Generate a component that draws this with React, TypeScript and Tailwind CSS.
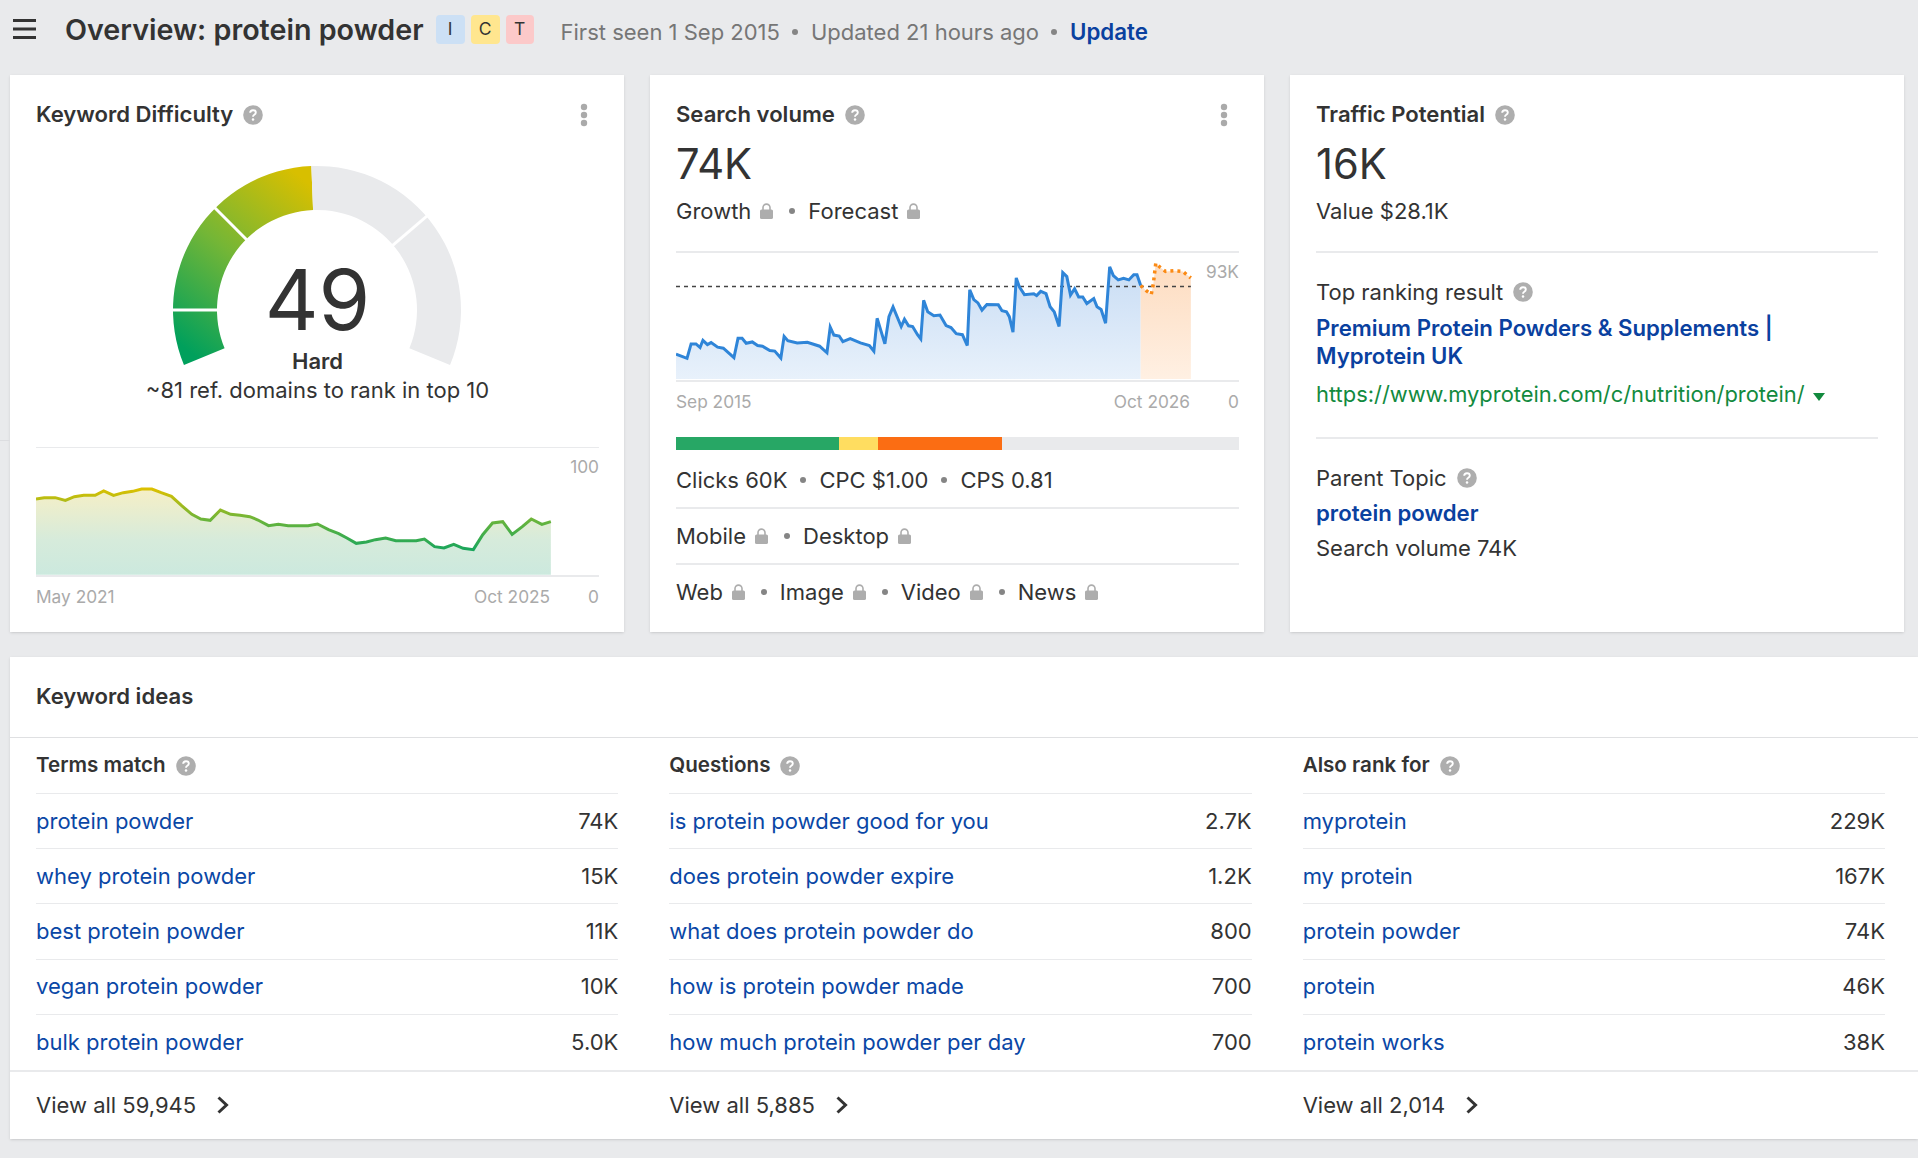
const kdLine =
  "88,238 108,234 135,234 160,242 182,231 205,227 233,227 254,214 278,227 302,219 325,215 347,208 372,208 395,219 420,230 445,258 470,284 492,298 515,302 540,271 565,284 588,287 612,291 632,301 658,318 682,314 706,318 755,318 778,313 805,330 830,342 850,355 873,371 898,367 920,360 945,355 970,363 1020,363 1040,358 1065,381 1088,385 1112,374 1135,386 1160,390 1183,345 1207,310 1232,306 1255,344 1280,321 1302,298 1328,314 1350,306";

const volLine =
  "88,884 115,897 125,853 137,853 147,864 154,842 165,855 174,849 190,863 204,866 230,895 240,836 250,836 260,851 275,847 288,858 300,860 318,873 330,875 345,896 353,830 362,843 385,850 410,848 440,860 458,880 466,802 475,826 488,829 497,846 515,837 540,850 562,858 573,875 581,775 600,853 610,770 620,740 640,800 648,778 658,798 668,800 680,825 688,838 695,720 705,755 720,767 735,765 750,797 762,803 775,822 790,825 802,858 808,688 818,718 828,728 838,750 850,733 878,734 887,752 898,755 905,770 914,817 922,652 930,680 942,703 965,700 972,706 982,693 995,700 1005,740 1015,755 1027,800 1036,636 1046,648 1055,704 1065,685 1075,710 1085,710 1095,730 1112,715 1120,740 1130,748 1141,790 1151,618 1160,645 1172,658 1185,653 1198,658 1210,642 1218,642 1227,675";

const forecastLine =
  "1227,675 1240,690 1253,702 1258,670 1264,607 1275,620 1288,632 1310,630 1330,632 1350,652";

const ideas = [
  {
    title: "Terms match",
    all: "View all 59,945",
    rows: [
      ["protein powder", "74K"],
      ["whey protein powder", "15K"],
      ["best protein powder", "11K"],
      ["vegan protein powder", "10K"],
      ["bulk protein powder", "5.0K"],
    ],
  },
  {
    title: "Questions",
    all: "View all 5,885",
    rows: [
      ["is protein powder good for you", "2.7K"],
      ["does protein powder expire", "1.2K"],
      ["what does protein powder do", "800"],
      ["how is protein powder made", "700"],
      ["how much protein powder per day", "700"],
    ],
  },
  {
    title: "Also rank for",
    all: "View all 2,014",
    rows: [
      ["myprotein", "229K"],
      ["my protein", "167K"],
      ["protein powder", "74K"],
      ["protein", "46K"],
      ["protein works", "38K"],
    ],
  },
];

function HelpIcon({ className = "" }: { className?: string }) {
  return (
    <svg viewBox="0 0 20 20" className={`h-[20px] w-[20px] shrink-0 ${className}`}>
      <circle cx="10" cy="10" r="9.8" fill="#aeaeae" />
      <path
        d="M7.2 7.8c0-1.7 1.2-2.6 2.8-2.6s2.8 1 2.8 2.4c0 1.2-.7 1.7-1.5 2.2-.8.5-1.3.9-1.3 1.9"
        fill="none"
        stroke="#fff"
        strokeWidth="1.9"
      />
      <circle cx="10" cy="14.6" r="1.25" fill="#fff" />
    </svg>
  );
}

function Lock() {
  return (
    <svg viewBox="0 0 13 16" className="ml-[9px] mr-[3px] h-[16px] w-[13px] shrink-0">
      <path d="M3 7V4.6a3.5 3.5 0 0 1 7 0V7" fill="none" stroke="#adadad" strokeWidth="1.6" />
      <rect x="0" y="6.5" width="13" height="9.5" rx="1.6" fill="#adadad" />
    </svg>
  );
}

function Dot() {
  return <span className="mx-[13px] h-[6px] w-[6px] shrink-0 rounded-full bg-[#858585]" />;
}

function Kebab() {
  return (
    <svg viewBox="0 0 8 24" className="h-[24px] w-[8px]">
      <circle cx="4" cy="4" r="3.2" fill="#aaaaaa" />
      <circle cx="4" cy="12" r="3.2" fill="#aaaaaa" />
      <circle cx="4" cy="20" r="3.2" fill="#aaaaaa" />
    </svg>
  );
}

function CardTitle({ title, menu = true }: { title: string; menu?: boolean }) {
  return (
    <div className="flex h-[28px] items-center justify-between">
      <div className="flex items-center gap-[10px]">
        <span className="text-[22.1px] font-semibold">{title}</span>
        <HelpIcon />
      </div>
      {menu && (
        <div className="mr-[11px] flex">
          <Kebab />
        </div>
      )}
    </div>
  );
}

// angle in degrees, 0 = pointing left, going clockwise over the top
function point(r: number, a: number) {
  const rad = (a * Math.PI) / 180;
  return `${(150 - r * Math.cos(rad)).toFixed(2)} ${(150 - r * Math.sin(rad)).toFixed(2)}`;
}

function arc(from: number, to: number) {
  const big = to - from > 180 ? 1 : 0;
  return `M${point(144, from)} A144 144 0 ${big} 1 ${point(144, to)} L${point(100, to)} A100 100 0 ${big} 0 ${point(100, from)} Z`;
}

function Gauge() {
  const seams = [0, 45, 139.5];
  return (
    <svg viewBox="0 0 300 210" className="absolute left-[131px] top-0 h-[210px] w-[300px]">
      <defs>
        <linearGradient id="gauge" gradientUnits="userSpaceOnUse" x1="20" y1="190" x2="150" y2="30">
          <stop offset="0" stopColor="#00a05c" />
          <stop offset="0.5" stopColor="#74b636" />
          <stop offset="1" stopColor="#d8bf00" />
        </linearGradient>
      </defs>
      <path d={arc(-22.5, 87.75)} fill="url(#gauge)" />
      <path d={arc(87.75, 202.5)} fill="#e9eaec" />
      {seams.map((s) => (
        <path key={s} d={`M${point(98, s)} L${point(146, s)}`} stroke="#fff" strokeWidth="3" />
      ))}
    </svg>
  );
}

function KdChart() {
  return (
    <svg
      viewBox="88 85 1380 381"
      preserveAspectRatio="none"
      className="h-[127px] w-full"
    >
      <defs>
        <linearGradient id="kdStroke" gradientUnits="userSpaceOnUse" x1="0" y1="208" x2="0" y2="390">
          <stop offset="0" stopColor="#dcc000" />
          <stop offset="0.5" stopColor="#6cb53a" />
          <stop offset="1" stopColor="#1aa65c" />
        </linearGradient>
        <linearGradient id="kdFill" gradientUnits="userSpaceOnUse" x1="0" y1="208" x2="0" y2="465">
          <stop offset="0" stopColor="#f6efc6" />
          <stop offset="0.6" stopColor="#d6ebdb" />
          <stop offset="1" stopColor="#cce9de" />
        </linearGradient>
      </defs>
      <polygon points={`88,465 ${kdLine} 1350,465`} fill="url(#kdFill)" />
      <polyline
        points={kdLine}
        fill="none"
        stroke="url(#kdStroke)"
        strokeWidth="3"
        vectorEffect="non-scaling-stroke"
      />
    </svg>
  );
}

function VolumeChart() {
  return (
    <svg
      viewBox="88 576 1380 387"
      preserveAspectRatio="none"
      className="h-[127px] w-full"
    >
      <defs>
        <linearGradient id="volFill" x1="0" y1="0" x2="0" y2="1">
          <stop offset="0" stopColor="#c9ddf4" />
          <stop offset="1" stopColor="#e8f1fb" />
        </linearGradient>
        <linearGradient id="fcFill" x1="0" y1="0" x2="0" y2="1">
          <stop offset="0" stopColor="#fddcc0" />
          <stop offset="1" stopColor="#fff0e3" />
        </linearGradient>
      </defs>
      <polygon points={`88,960 ${volLine} 1227,960`} fill="url(#volFill)" />
      <polygon points={`${forecastLine} 1350,960 1227,960`} fill="url(#fcFill)" />
      <line
        x1="88"
        y1="678"
        x2="1350"
        y2="678"
        stroke="#444"
        strokeWidth="1.4"
        strokeDasharray="4 4"
        vectorEffect="non-scaling-stroke"
      />
      <polyline
        points={volLine}
        fill="none"
        stroke="#2f85d8"
        strokeWidth="3"
        vectorEffect="non-scaling-stroke"
      />
      <polyline
        points={forecastLine}
        fill="none"
        stroke="#fb8a14"
        strokeWidth="3.5"
        strokeDasharray="3 4"
        vectorEffect="non-scaling-stroke"
      />
    </svg>
  );
}

function Chevron() {
  return (
    <svg viewBox="0 0 12 18" className="h-[18px] w-[12px]">
      <path d="M1.5 1.5L9.5 9l-8 7.5" fill="none" stroke="#333" strokeWidth="3" />
    </svg>
  );
}

export default function App() {
  return (
    <div
      className="relative min-h-[1158px] overflow-hidden bg-[#e9eaec] text-[22px] text-[#333333]"
      style={{ fontFamily: "Inter, 'Liberation Sans', sans-serif" }}
    >
      <div className="absolute left-0 top-[440px] h-px w-[10px] bg-[#dcdde0]" />

      {/* top bar */}
      <div className="flex h-[75px] items-start pl-[13px] pt-[15px]">
        <svg viewBox="0 0 23 20" className="mt-[4px] h-[20px] w-[23px] shrink-0">
          <rect width="23" height="3" fill="#333" />
          <rect y="8.5" width="23" height="3" fill="#333" />
          <rect y="17" width="23" height="3" fill="#333" />
        </svg>
        <span className="ml-[29px] text-[28.7px] font-semibold leading-[30px]">
          Overview: protein powder
        </span>
        <div className="ml-[12px] flex gap-[6px]">
          <span className="flex h-[29px] w-[29px] items-center justify-center rounded-[4px] bg-[#cce0f5] text-[17.5px]">
            I
          </span>
          <span className="flex h-[29px] w-[29px] items-center justify-center rounded-[4px] bg-[#ffe68f] text-[17.5px]">
            C
          </span>
          <span className="flex h-[29px] w-[28px] items-center justify-center rounded-[4px] bg-[#fcc9c9] text-[17.5px]">
            T
          </span>
        </div>
        <div className="ml-[27px] flex h-[34px] items-center text-[#767676]">
          <span>First seen 1 Sep 2015</span>
          <span className="mx-[12.5px] h-[6px] w-[6px] rounded-full bg-[#858585]" />
          <span>Updated 21 hours ago</span>
          <span className="mx-[12.5px] h-[6px] w-[6px] rounded-full bg-[#858585]" />
          <span className="text-[22.3px] font-semibold text-[#0a419f]">Update</span>
        </div>
      </div>

      {/* cards */}
      <div className="flex gap-[26px] pl-[10px] pr-[14px]">
        <div className="h-[557px] w-[614px] bg-white pl-[26px] pr-[25px] pt-[26px] shadow-sm">
          <CardTitle title="Keyword Difficulty" />
          <div className="relative mt-[31px] h-[186px]">
            <Gauge />
            <div className="absolute inset-x-0 top-[89px] text-center text-[83.5px] leading-[102px]">
              49
            </div>
          </div>
          <div className="flex h-[30px] items-center justify-center font-semibold">Hard</div>
          <div className="flex h-[28px] items-center justify-center">
            ~81 ref. domains to rank in top 10
          </div>
          <div className="relative mt-[43px] border-b-2 border-t border-[#e9eaec]">
            <KdChart />
            <span className="absolute right-0 top-[6px] text-[17.3px] text-[#aaaaaa]">100</span>
          </div>
          <div className="mt-[8px] flex h-[24px] items-center text-[17.3px] text-[#aaaaaa]">
            <span>May 2021</span>
            <span className="ml-auto mr-[38px]">Oct 2025</span>
            <span>0</span>
          </div>
        </div>

        <div className="h-[557px] w-[614px] bg-white pl-[26px] pr-[25px] pt-[26px] shadow-sm">
          <CardTitle title="Search volume" />
          <div className="mt-[8px] flex h-[54px] items-center text-[41.7px]">74K</div>
          <div className="mt-[6px] flex h-[28px] items-center">
            <span>Growth</span>
            <Lock />
            <Dot />
            <span>Forecast</span>
            <Lock />
          </div>
          <div className="relative mt-[26px] border-b-2 border-t-2 border-[#e9eaec]">
            <VolumeChart />
            <span className="absolute right-0 top-[6px] text-[17.3px] text-[#aaaaaa]">93K</span>
          </div>
          <div className="mt-[8px] flex h-[24px] items-center text-[17.3px] text-[#aaaaaa]">
            <span>Sep 2015</span>
            <span className="ml-auto mr-[38px]">Oct 2026</span>
            <span>0</span>
          </div>
          <div className="mt-[23px] flex h-[13px] bg-[#e9eaec]">
            <div className="w-[163px] bg-[#27a765]" />
            <div className="w-[39px] bg-[#ffdd60]" />
            <div className="w-[124px] bg-[#fb6d13]" />
          </div>
          <div className="flex h-[59px] items-center border-b-2 border-[#e9eaec] pt-[3px]">
            <span>Clicks 60K</span>
            <Dot />
            <span>CPC $1.00</span>
            <Dot />
            <span>CPS 0.81</span>
          </div>
          <div className="flex h-[56px] items-center border-b-2 border-[#e9eaec]">
            <span>Mobile</span>
            <Lock />
            <Dot />
            <span>Desktop</span>
            <Lock />
          </div>
          <div className="flex h-[56px] items-center pb-[2px]">
            <span>Web</span>
            <Lock />
            <Dot />
            <span>Image</span>
            <Lock />
            <Dot />
            <span>Video</span>
            <Lock />
            <Dot />
            <span>News</span>
            <Lock />
          </div>
        </div>

        <div className="h-[557px] w-[614px] bg-white px-[26px] pt-[26px] shadow-sm">
          <CardTitle title="Traffic Potential" menu={false} />
          <div className="mt-[8px] flex h-[54px] items-center text-[41.7px]">16K</div>
          <div className="mt-[6px] flex h-[28px] items-center">Value $28.1K</div>
          <div className="mt-[26px] border-t-2 border-[#e9eaec]" />
          <div className="mt-[25px] flex h-[28px] items-center gap-[10px]">
            <span>Top ranking result</span>
            <HelpIcon />
          </div>
          <div className="mt-[8px] max-w-[480px] text-[22.2px] font-semibold leading-[28px] text-[#0a419f]">
            Premium Protein Powders &amp; Supplements | Myprotein UK
          </div>
          <div className="mt-[10px] flex h-[28px] items-center text-[21.9px] text-[#128a3e]">
            <span>https://www.myprotein.com/c/nutrition/protein/</span>
            <svg viewBox="0 0 12 8" className="ml-[8px] mt-[5px] h-[8px] w-[12px]">
              <path d="M0 0h12L6 8z" fill="#128a3e" />
            </svg>
          </div>
          <div className="mt-[29px] border-t-2 border-[#e9eaec]" />
          <div className="mt-[25px] flex h-[28px] items-center gap-[10px]">
            <span>Parent Topic</span>
            <HelpIcon />
          </div>
          <div className="mt-[7px] flex h-[28px] items-center text-[22.2px] font-semibold text-[#0a419f]">
            protein powder
          </div>
          <div className="mt-[7px] flex h-[28px] items-center">Search volume 74K</div>
        </div>
      </div>

      {/* keyword ideas */}
      <div className="ml-[10px] mt-[25px] bg-white shadow-sm">
        <div className="flex h-[81px] items-center border-b border-[#dfe0e2] pl-[26px] text-[22.1px] font-semibold">
          Keyword ideas
        </div>
        <div className="grid grid-cols-3 gap-x-[51px] border-b-2 border-[#e9eaec] pl-[26px] pr-[33px]">
          {ideas.map((col) => (
            <div key={col.title}>
              <div className="flex h-[56px] items-center gap-[10px] border-b border-[#e9eaec] text-[20.6px] font-semibold">
                <span>{col.title}</span>
                <HelpIcon />
              </div>
              {col.rows.map(([name, value], i) => (
                <div
                  key={name}
                  className={`flex h-[55.2px] items-center justify-between ${
                    i < 4 ? "border-b border-[#e9eaec]" : ""
                  }`}
                >
                  <span className="text-[#0a47a6]">{name}</span>
                  <span>{value}</span>
                </div>
              ))}
            </div>
          ))}
        </div>
        <div className="grid h-[67px] grid-cols-3 gap-x-[51px] pl-[26px] pr-[33px]">
          {ideas.map((col) => (
            <div key={col.all} className="flex items-center gap-[21px]">
              <span>{col.all}</span>
              <Chevron />
            </div>
          ))}
        </div>
      </div>
    </div>
  );
}
